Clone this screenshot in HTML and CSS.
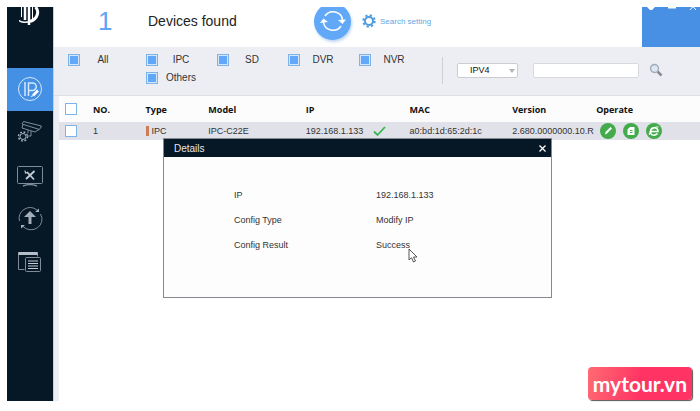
FILE: index.html
```html
<!DOCTYPE html>
<html lang="en">
<head>
    <meta charset="UTF-8">
    <title>Devices found</title>
    <link rel="stylesheet" href="styles.css">
</head>
<body>
    <div class="app">
        <nav class="sidebar">
            <div class="logo">
                <svg width="22" height="20" viewBox="0 0 22 20">
                    <g fill="none" stroke="#fff">
                        <path d="M6 0v13" stroke-width="2.500"/>
                        <path d="M2.500 0v10" stroke-width="1"/>
                        <path d="M10 0v18" stroke-width="2.500"/>
                        <path d="M13.500 0v14" stroke-width="1"/>
                        <path d="M16.500 0C20.500 4 19 12 11 14.500" stroke-width="3"/>
                        <path d="M0 13.500c3 2 7 2 11 1" stroke-width="1.500"/>
                    </g>
                </svg>
            </div>
            <a class="nav-item active" href="#ip" aria-label="Modify IP">
                <svg width="26" height="26" viewBox="0 0 26 26" fill="none" stroke="#d5e8fb">
                    <circle cx="13" cy="12" r="11.500"/>
                    <path d="M8 5v14M11.500 19V6h4a3.500 3.500 0 0 1 0 7.500h-4" stroke-width="1.500"/>
                    <path d="M16 18.500l5-5" stroke="#fff" stroke-width="2.500"/>
                    <path d="M14 19.500l2.500-1" stroke="#fff"/>
                </svg>
            </a>
            <a class="nav-item" href="#camera" aria-label="Device config">
                <svg width="26" height="24" viewBox="0 0 26 24" fill="none" stroke="#7f8b99">
                    <path d="M5 3l1.500-2.500L24.500 5l-2 3.500zM6 3.500l-1 3.500 13 4 4-2.500" />
                    <path d="M14 10v5h-4M11 9v3" />
                    <circle cx="6" cy="15.500" r="3" stroke="#a9b3be"/>
                    <circle cx="6" cy="15.500" r="4.500" stroke="#a9b3be" stroke-width="1.500" stroke-dasharray="1.800 1.740"/>
                </svg>
            </a>
            <a class="nav-item" href="#system" aria-label="System settings">
                <svg width="28" height="24" viewBox="0 0 28 24" fill="none" stroke="#7f8b99">
                    <rect x="1.500" y="2.500" width="25" height="17" rx="1"/>
                    <path d="M7 22q7-3 14 0" stroke-width="1.500"/>
                    <g stroke="#c5ccd4" stroke-width="1.800">
                        <path d="M11 8l7 7.500"/>
                        <path d="M18.500 7L10 15"/>
                        <path d="M9 6.500l.5 2.500 2.500-.5" stroke-width="1.200"/>
                    </g>
                </svg>
            </a>
            <a class="nav-item" href="#upgrade" aria-label="Upgrade">
                <svg width="26" height="24" viewBox="0 0 26 24" fill="none" stroke="#7f8b99">
                    <path d="M2.500 14A11 10.500 0 0 1 20 3M6 19.500A11 10.500 0 0 0 23.500 7"/>
                    <path d="M18 5h4V1.500zM8 18H4v3.500z" fill="#a9b3be" stroke="none"/>
                    <path d="M13 17V8" stroke="#a3adb8" stroke-width="3"/>
                    <path d="M13 4l6 6H7z" fill="#a3adb8" stroke="none"/>
                </svg>
            </a>
            <a class="nav-item" href="#templates" aria-label="Templates">
                <svg width="26" height="24" viewBox="0 0 26 24" fill="none" stroke="#7f8b99">
                    <path d="M7.500 19.500h-6v-17h19v4"/>
                    <path d="M1.500 3.500h19" stroke="#b5bec8" stroke-width="3"/>
                    <rect x="8.500" y="7.500" width="15" height="14" rx="1"/>
                    <path d="M11 11h10M11 13.500h10M11 16h10M11 18.500h10" stroke="#c5ccd4"/>
                </svg>
            </a>
        </nav>

        <main class="main">
            <header class="header">
                <span class="count">1</span>
                <h1 class="title">Devices found</h1>
                <button class="refresh" type="button" aria-label="Refresh">
                    <svg width="26" height="24" viewBox="0 0 26 24" fill="none" stroke="#fff" stroke-width="1.500">
                        <path d="M3.500 13a9.500 9 0 0 0 17.500 4M22.500 11A9.500 9 0 0 0 5 7"/>
                        <path d="M0 14l3.500-4.500L8 13zM26 10.500L22.500 15 18 11z" fill="#fff" stroke="none"/>
                    </svg>
                </button>
                <a class="search-setting" href="#search">
                    <svg width="14" height="14" viewBox="0 0 14 14" fill="none" stroke="#4f9be0">
                        <circle cx="7" cy="7" r="4" stroke-width="2"/>
                        <circle cx="7" cy="7" r="5.700" stroke-width="2" stroke-dasharray="2.240 2.240"/>
                    </svg>
                    Search setting
                </a>
                <div class="window-buttons">
                    <button type="button" aria-label="Menu"><svg width="8" height="4" viewBox="0 0 8 4"><path d="M0 0h8L5 3H3z" fill="#fff"/></svg></button>
                    <button type="button" aria-label="Minimize"><svg width="8" height="4" viewBox="0 0 8 4"><path d="M0 0h8v1.500H0z" fill="#fff"/></svg></button>
                    <button type="button" aria-label="Close"><svg width="8" height="4" viewBox="0 0 8 4"><path d="M1 3l2.500-3h1L7 3" fill="none" stroke="#fff"/></svg></button>
                </div>
            </header>

            <form class="filters">
                <div class="filter-types">
                    <label class="filter"><input class="box" type="checkbox" checked><span>All</span></label>
                    <label class="filter"><input class="box" type="checkbox" checked><span>IPC</span></label>
                    <label class="filter"><input class="box" type="checkbox" checked><span>SD</span></label>
                    <label class="filter"><input class="box" type="checkbox" checked><span>DVR</span></label>
                    <label class="filter"><input class="box" type="checkbox" checked><span>NVR</span></label>
                    <label class="filter second-row"><input class="box" type="checkbox" checked><span>Others</span></label>
                </div>
                <div class="search">
                    <div class="select">
                        <select aria-label="IP version">
                            <option>IPV4</option>
                            <option>IPV6</option>
                        </select>
                    </div>
                    <input class="search-box" type="text" aria-label="Search">
                    <button class="search-button" type="button" aria-label="Search">
                        <svg width="14" height="14" viewBox="0 0 14 14" fill="none">
                            <path d="M8.500 8.500l4 4" stroke="#8b8b93" stroke-width="2.500"/>
                            <circle cx="5.500" cy="5.500" r="4" fill="#dbe6f3" stroke="#9fa9b8" stroke-width="1.300"/>
                        </svg>
                    </button>
                </div>
            </form>

            <table class="devices">
                <colgroup>
                    <col class="col-check">
                    <col class="col-no">
                    <col class="col-type">
                    <col class="col-model">
                    <col class="col-ip">
                    <col class="col-mac">
                    <col class="col-version">
                    <col>
                </colgroup>
                <thead>
                    <tr>
                        <th><input class="box" type="checkbox" aria-label="Select all"></th>
                        <th>NO.</th>
                        <th>Type</th>
                        <th>Model</th>
                        <th>IP</th>
                        <th>MAC</th>
                        <th>Version</th>
                        <th>Operate</th>
                    </tr>
                </thead>
                <tbody>
                    <tr>
                        <td><input class="box" type="checkbox" aria-label="Select device 1"></td>
                        <td>1</td>
                        <td><span class="type">IPC</span></td>
                        <td>IPC-C22E</td>
                        <td>
                            <div class="ip">
                                192.168.1.133
                                <svg width="14" height="12" viewBox="0 0 14 12"><path d="M1 6.500L4.500 10 12 2" fill="none" stroke="#3cb554" stroke-width="1.800"/></svg>
                            </div>
                        </td>
                        <td>a0:bd:1d:65:2d:1c</td>
                        <td>2.680.0000000.10.R</td>
                        <td>
                            <div class="actions">
                                <button type="button" aria-label="Edit"><svg width="16" height="16" viewBox="0 0 16 16"><path d="M5 11.500L5.500 9l5-5 1.500 1.500-5 5z" fill="#fff"/></svg></button>
                                <button type="button" aria-label="Details"><svg width="16" height="16" viewBox="0 0 16 16"><path d="M7 4h4.500v8h-7V6.500z" fill="#fff"/><path d="M7 7.500h2.500M7 9.500h2.500" stroke="#43ab4b"/></svg></button>
                                <button type="button" aria-label="Open web page"><svg width="16" height="16" viewBox="0 0 16 16" fill="none" stroke="#fff" stroke-width="1.500"><path d="M4.500 8.500H12C12 3.500 4.500 3.500 4.500 8.500s5 4 7 2"/><path d="M3.500 12C2 9 8 3 12.500 4" stroke-width="1"/></svg></button>
                            </div>
                        </td>
                    </tr>
                </tbody>
            </table>

            <section class="dialog" role="dialog" aria-labelledby="dialog-title">
                <div class="dialog-header">
                    <h2 id="dialog-title">Details</h2>
                    <button type="button" aria-label="Close">
                        <svg width="7" height="7" viewBox="0 0 7 7"><path d="M.5.5l6 6M6.500.5l-6 6" stroke="#fff" stroke-width="1.300"/></svg>
                    </button>
                </div>
                <dl class="details">
                    <dt>IP</dt>
                    <dd>192.168.1.133</dd>
                    <dt>Config Type</dt>
                    <dd>Modify IP</dd>
                    <dt>Config Result</dt>
                    <dd>Success</dd>
                </dl>
                <svg class="cursor" width="11" height="15" viewBox="0 0 11 15"><path d="M1 1v11l2.500-2.300L5.500 14l2-1-2-4H9z" fill="#fff" stroke="#555"/></svg>
            </section>
        </main>

        <a class="badge" href="#mytour">mytour.vn</a>
    </div>
</body>
</html>
```

FILE: styles.css
```css
* {
    box-sizing: border-box;
}
body {
    margin: 0;
    padding: 7px 0 10px 7px;
    min-height: 100vh;
    display: flex;
    background: #fff;
    color: #333;
    font-family: "Liberation Sans", Arial, sans-serif;
    font-size: 9px;
}
button {
    padding: 0;
    border: 0;
    background: none;
    cursor: pointer;
}
svg {
    display: block;
}
.app {
    position: relative;
    flex: 1;
    display: flex;
}

/* Sidebar */
.sidebar {
    width: 46px;
    background: #061726;
}
.logo {
    height: 61px;
    display: flex;
    justify-content: center;
}
.nav-item {
    height: 43px;
    display: flex;
    align-items: center;
    justify-content: center;
}
.active {
    background: #4490e4;
}

.main {
    position: relative;
    flex: 1;
    border-left: 1px solid #c9ced6;
}

/* Header */
.header {
    height: 40px;
    display: flex;
    align-items: center;
    padding: 0 0 12px 44px;
    overflow: hidden;
    background: #fff;
}
.count {
    width: 50px;
    color: #5ea6f5;
    font-size: 26px;
    line-height: 26px;
}
.title {
    width: 166px;
    margin: 0;
    color: #222;
    font-size: 14px;
    font-weight: normal;
}
.refresh {
    width: 37px;
    height: 37px;
    display: flex;
    flex-shrink: 0;
    align-items: center;
    justify-content: center;
    border-radius: 50%;
    background: #62a8f8;
    box-shadow: 1px 2px 3px #bcd5f0;
}
.search-setting {
    display: flex;
    align-items: center;
    gap: 4px;
    margin-left: 11px;
    color: #64a8e6;
    font-size: 8px;
    text-decoration: none;
}
.window-buttons {
    width: 58px;
    height: 40px;
    display: flex;
    align-items: flex-start;
    align-self: flex-start;
    justify-content: space-between;
    margin-left: auto;
    padding: 0 3px 0 5px;
    background: #4790e4;
}

/* Filters */
.filters {
    min-height: 49px;
    display: flex;
    padding: 6px 8px 8px 14px;
    border-bottom: 1px solid #dddee4;
    background: #edeef4;
}
.filter-types {
    width: 374px;
    display: grid;
    grid-template-columns: 78px 71px 71px 71px 71px;
    row-gap: 4px;
    align-content: start;
}
.filter {
    display: flex;
    align-items: center;
    font-size: 10px;
    line-height: 14px;
}
.filter span {
    width: 46px;
    text-align: center;
}
.second-row {
    grid-row: 2;
    grid-column: 2;
}
.box {
    appearance: none;
    display: block;
    width: 12px;
    height: 12px;
    margin: 0;
    border: 1px solid #7db4ea;
    background: #fff;
}
.box:checked {
    background: #62a8f8;
    box-shadow: inset 0 0 0 1px #d3e5f8;
}
.search {
    align-self: center;
    height: 27px;
    display: flex;
    align-items: center;
    padding-left: 14px;
    border-left: 1px solid #cfd0d6;
}
.select {
    position: relative;
}
.select::after {
    content: "";
    position: absolute;
    top: 6px;
    right: 3px;
    border: 3px solid transparent;
    border-top: 4px solid #b4b5ba;
    border-bottom: 0;
}
.select select {
    appearance: none;
    display: block;
    width: 61px;
    height: 15px;
    padding: 0 12px;
    border: 1px solid #cccdd3;
    border-radius: 2px;
    background: #fff;
    color: #111;
    font: inherit;
}
.search-box {
    width: 106px;
    height: 15px;
    margin: 0 10px 0 15px;
    padding: 0 4px;
    border: 1px solid #d8d9df;
    border-radius: 2px;
    background: #fff;
    font: inherit;
}

/* Devices */
.filters,
.devices {
    position: relative;
}
.main::before {
    content: "";
    position: absolute;
    top: 40px;
    bottom: 0;
    left: 0;
    width: 5px;
    background: #edeef4;
}
.devices {
    width: calc(100% - 5px);
    margin-left: 5px;
    table-layout: fixed;
    border-collapse: collapse;
}
.devices th,
.devices td {
    padding: 0;
    text-align: left;
    white-space: nowrap;
}
.devices th {
    height: 26px;
    background: #fcfcfc;
    color: #111;
    font-family: "Open Sans", "Noto Sans", sans-serif;
}
.devices td {
    height: 18px;
    background: #e1e2e9;
}
.devices .box {
    margin-left: 6px;
}
.col-check { width: 34px; }
.col-no { width: 8.2%; }
.col-type { width: 9.8%; }
.col-model { width: 15.2%; }
.col-ip { width: 16.2%; }
.col-mac { width: 16%; }
.col-version { width: 13.1%; }

.type {
    padding-left: 3px;
    border-left: 3px solid #cd7c55;
}
.ip {
    display: flex;
    align-items: center;
    gap: 10px;
}
.actions {
    display: flex;
    gap: 7px;
    padding-left: 4px;
}
.actions button {
    border-radius: 50%;
    background: #43ab4b;
}

/* Details dialog */
.dialog {
    position: absolute;
    top: 131px;
    left: 109px;
    width: 389px;
    border: 1px solid #85888e;
    background: #fdfdfd;
}
.dialog-header {
    height: 18px;
    display: flex;
    align-items: center;
    justify-content: space-between;
    padding: 0 5px 0 10px;
    background: #061726;
}
.dialog-header h2 {
    margin: 0;
    color: #e6e8ea;
    font-size: 10px;
    font-weight: normal;
}
.details {
    display: grid;
    grid-template-columns: 142px 1fr;
    row-gap: 13px;
    margin: 0;
    padding: 32px 0 46px 70px;
    line-height: 12px;
}
.details dd {
    margin: 0;
}
.cursor {
    position: absolute;
    top: 109px;
    left: 244px;
}

.badge {
    position: absolute;
    right: 8px;
    bottom: 1px;
    padding: 0 5px;
    border-radius: 4px;
    background: linear-gradient(100deg, #ff6a72, #ff3465 50%);
    box-shadow: 1px 1px 1px #555;
    color: #fff;
    font-family: Lato, sans-serif;
    font-size: 21px;
    font-weight: 700;
    line-height: 33px;
    text-decoration: none;
}
```
